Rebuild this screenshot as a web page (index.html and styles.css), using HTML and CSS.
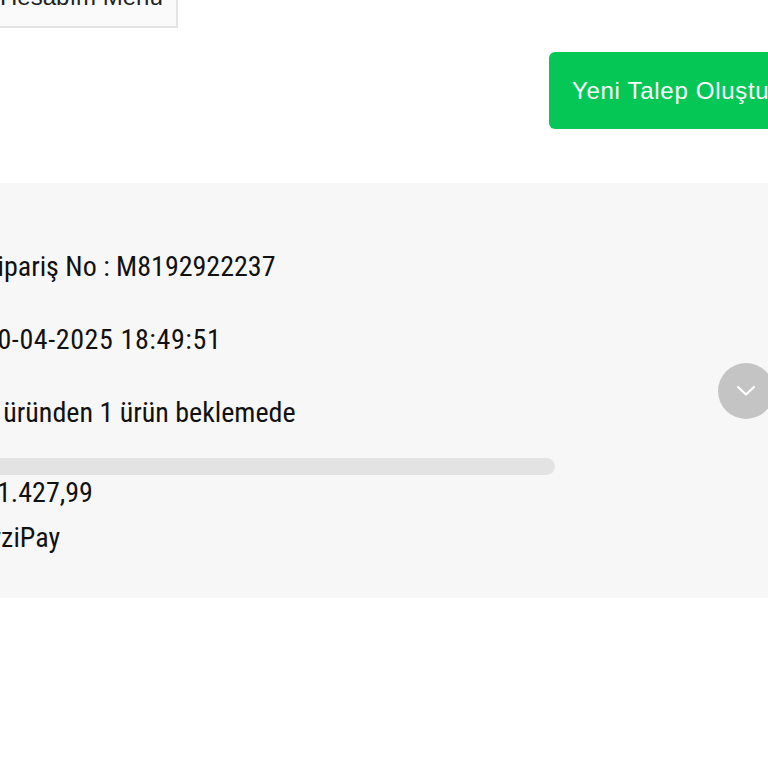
FILE: index.html
```html
<!DOCTYPE html>
<html lang="tr">
<head>
<meta charset="utf-8">
<link rel="stylesheet" href="styles.css">
</head>
<body>
<div class="page">
  <div class="topbar">
    <div class="menu-btn">Hesabım Menü</div>
  </div>
  <div class="actions">
    <div class="new-btn">Yeni Talep Oluştur</div>
  </div>
  <div class="order">
    <div class="order-info">
      <div class="line l1">Sipariş No : M8192922237</div>
      <div class="line l2">10-04-2025 18:49:51</div>
      <div class="line l3">1 üründen 1 ürün beklemede</div>
      <div class="bar"></div>
      <div class="line l4">₺1.427,99</div>
      <div class="line l5">iyziPay</div>
    </div>
    <div class="toggle">
      <svg width="20" height="12" viewBox="0 0 20 12"><path d="M2 2 L10 9.5 L18 2" fill="none" stroke="#fff" stroke-width="2.2" stroke-linecap="round" stroke-linejoin="round"/></svg>
    </div>
  </div>
</div>
</body>
</html>
```
FILE: styles.css
```css
html, body {
  margin: 0;
  padding: 0;
  background: #ffffff;
  overflow: hidden;
}
.page {
  width: 768px;
  overflow: hidden;
  height: 768px;
}
.topbar {
  display: flex;
  margin-top: -34px;
  margin-left: -22px;
}
.menu-btn {
  height: 58px;
  box-sizing: content-box;
  border: 2px solid #e3e3e3;
  background: #fafafa;
  padding: 0 13px 0 20px;
  font-family: "Liberation Sans", Arial, sans-serif;
  font-size: 24px;
  line-height: 58px;
  color: #222;
  white-space: nowrap;
}
.actions {
  display: flex;
  margin-top: 24px;
  padding-left: 549px;
}
.new-btn {
  flex: none;
  height: 77px;
  background: #05c755;
  border-radius: 6px;
  color: #ffffff;
  font-family: "Liberation Sans", Arial, sans-serif;
  font-size: 24px;
  letter-spacing: 0.7px;
  line-height: 78px;
  padding: 0 30px 0 23px;
  white-space: nowrap;
}
.order {
  margin-top: 54px;
  height: 415px;
  background: #f7f7f7;
  display: flex;
  align-items: center;
  justify-content: space-between;
}
.order-info {
  margin-left: -17px;
  display: flex;
  flex-direction: column;
  padding-top: 24px;
}
.line {
  font-family: "Liberation Sans Narrow", "Roboto Condensed", "DejaVu Sans Condensed", sans-serif;
  font-size: 28px;
  line-height: 36px;
  color: #111111;
  white-space: nowrap;
}
.l2, .l3 {
  margin-top: 37px;
}
.l2 {
  letter-spacing: 0.6px;
}
.bar {
  margin-top: 27px;
  width: 572px;
  height: 17px;
  border-radius: 9px;
  background: #e3e3e3;
}
.l5 {
  margin-top: 9px;
}
.toggle {
  width: 56px;
  height: 56px;
  border-radius: 50%;
  background: #c4c4c4;
  margin-right: -6px;
  display: flex;
  align-items: center;
  justify-content: center;
}
.toggle svg {
  display: block;
}
```
